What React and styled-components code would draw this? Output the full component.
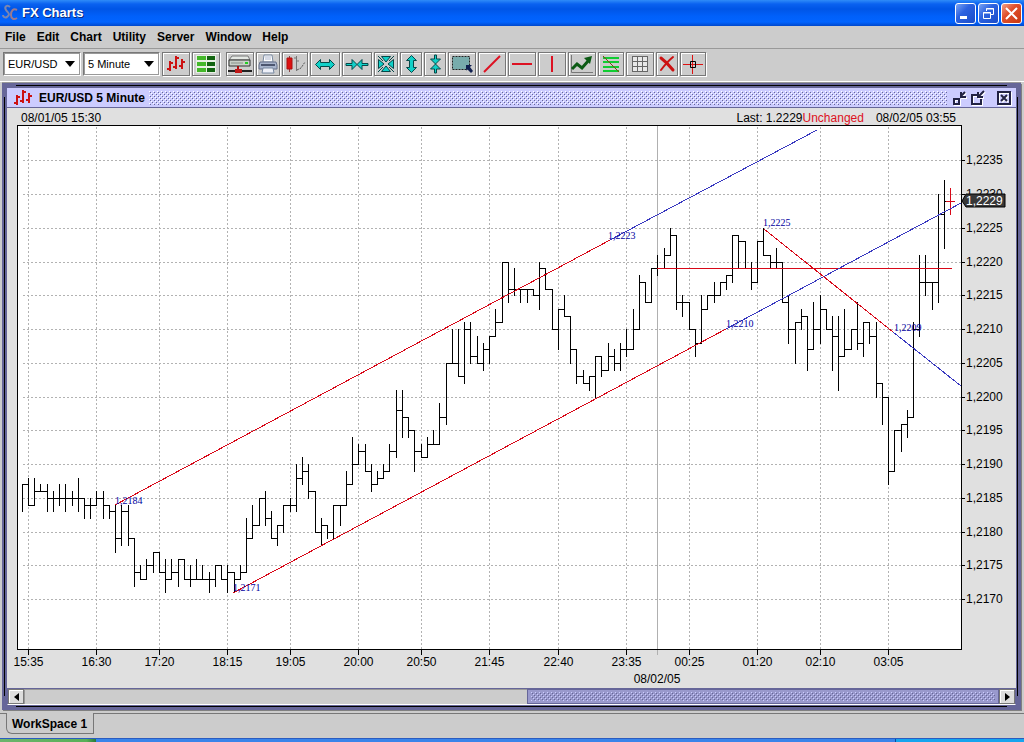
import styled, { createGlobalStyle } from 'styled-components';

const color = {
  panel: '#cccccc',
  chartPanel: '#e0e0e0',
  purple: '#666699',
  midPurple: '#9999cc',
  lightPurple: '#ccccff',
  grid: '#b2b2b2',
  up: '#cc1111',
  teal: '#10d0c8',
  trend: '#d80818',
  projection: '#3838c0',
};

const bumps = (light, dark) => `
    background-image:
      conic-gradient(from 270deg at 1px 1px, ${light} 90deg, transparent 0),
      conic-gradient(from 270deg at 1px 1px, ${light} 90deg, transparent 0),
      conic-gradient(from 270deg at 1px 1px, ${dark} 90deg, transparent 0),
      conic-gradient(from 270deg at 1px 1px, ${dark} 90deg, transparent 0);
    background-size: 4px 4px;
    background-position: 0 0, 2px 2px, 1px 1px, 3px 3px;
`;

const GlobalStyle = createGlobalStyle`
    * {
        box-sizing: border-box;
    }
    body {
        margin: 0;
        background-color: ${color.panel};
        font-family: 'Liberation Sans', Arial, sans-serif;
        font-size: 12px;
        line-height: 16px;
        color: #000;
    }
    button, select {
        font-family: inherit;
        margin: 0;
        padding: 0;
    }
    svg {
        display: block;
    }
`;

const TitleBar = styled.header`
    display: flex;
    align-items: center;
    height: 26px;
    padding: 0 2px;
    gap: 2px;
    background: linear-gradient(#2f8cf8 0, #0a62f0 4px, #0055e6 9px, #0060fa 16px, #0164ff 22px, #0048cc 26px);
    .title {
        flex: 1;
        margin: 0;
        padding-left: 1px;
        font-size: 13px;
        font-weight: 700;
        line-height: 20px;
        color: white;
        text-shadow: 1px 1px 0 #0a2a80;
    }
`;

const WindowButton = styled.button`
    display: grid;
    place-items: center;
    width: 21px;
    height: 21px;
    border: 1px solid white;
    border-radius: 3px;
    background: ${(props) => (props.$close
    ? 'linear-gradient(135deg, #f0a088, #e0502c 40%, #c83810)'
    : 'linear-gradient(135deg, #7aa4f4, #2c62e0 40%, #1a4cc8)')};
`;

const MenuBar = styled.nav`
    display: flex;
    height: 23px;
    padding: 0 5px;
    gap: 11px;
    border-bottom: 1px solid #999;
`;

const MenuItem = styled.button`
    border: 0;
    background: none;
    font-size: 12px;
    font-weight: 700;
    line-height: 22px;
`;

const Toolbar = styled.div`
    display: flex;
    align-items: center;
    height: 32px;
    padding: 0 3px 2px;
    gap: 2px;
`;

const Gap = styled.span`
    width: 2px;
`;

const Combo = styled.label`
    position: relative;
    width: ${(props) => props.$width}px;
    height: 24px;
    border: 1px solid #777;
    border-right-color: white;
    border-bottom-color: white;
    select {
        width: 100%;
        height: 22px;
        padding-left: 3px;
        border: 1px solid #999;
        border-radius: 0;
        appearance: none;
        background-color: white;
        font-size: 11px;
        color: #000;
    }
    svg {
        position: absolute;
        top: 8px;
        right: 5px;
        pointer-events: none;
    }
`;

const ToolButton = styled.button`
    display: grid;
    place-items: center;
    flex: none;
    width: ${(props) => props.$width}px;
    height: 24px;
    border: 1px solid #777;
    background-color: ${color.panel};
    box-shadow: inset 1px 1px 0 white, 1px 1px 0 white;
`;

const Desktop = styled.main`
    padding: 1px 3px 0 2px;
    border-top: 1px solid white;
`;

const line = 'linear-gradient(#000, #000)';
const Frame = styled.section`
    padding: 5px;
    background:
      ${line} 14px 2px / calc(100% - 28px) 1px no-repeat,
      ${line} 14px calc(100% - 3px) / calc(100% - 28px) 1px no-repeat,
      ${line} 2px 14px / 1px calc(100% - 28px) no-repeat,
      ${line} calc(100% - 3px) 14px / 1px calc(100% - 28px) no-repeat,
      ${color.purple};
    box-shadow: 1px 1px 0 #808080, 0 -1px 0 #999;
`;

const FrameTitle = styled.div`
    display: flex;
    align-items: center;
    height: 20px;
    padding: 0 5px 0 6px;
    border-bottom: 1px solid ${color.purple};
    background-color: ${color.lightPurple};
    h2 {
        margin: 0 4px 0 6px;
        font-size: 12px;
        font-weight: 700;
    }
`;

const Bumps = styled.div`
    flex: 1;
    height: 14px;
    margin-right: 5px;
    ${bumps('#ffffff', '#666699')}
`;

const FrameButton = styled.button`
    border: 0;
    background: none;
    & + & {
        margin-left: 2px;
    }
    &:last-child {
        margin-left: 11px;
    }
    svg {
        filter: drop-shadow(1px 1px 0 white);
    }
`;

const ChartPanel = styled.div`
    background-color: ${color.chartPanel};
`;

const ChartHeader = styled.div`
    display: flex;
    height: 17px;
    padding: 2px 60px 0 14px;
    .last {
        margin-left: auto;
    }
    .change {
        color: #dd1122;
    }
    .end {
        margin-left: 12px;
    }
`;

const ChartSvg = styled.svg`
    width: 100%;
    height: auto;
    font-size: 12px;
    .crisp {
        shape-rendering: crispEdges;
    }
    .mark {
        font-family: 'Liberation Serif', 'Times New Roman', serif;
        font-size: 10px;
        fill: #0000a0;
    }
`;

const ScrollBar = styled.div`
    display: flex;
    height: 17px;
    border: 1px solid ${color.purple};
    border-bottom-color: white;
    background-color: ${color.panel};
`;

const ScrollButton = styled.button`
    display: grid;
    place-items: center;
    width: 16px;
    border: 1px solid #777;
    background-color: #ddd;
    box-shadow: inset 1px 1px 0 white;
`;

const ScrollTrack = styled.div`
    flex: 1;
    display: flex;
    justify-content: flex-end;
    box-shadow: inset 1px 1px 0 #999;
`;

const ScrollThumb = styled.div`
    width: 48.4%;
    padding: 2px 3px;
    border: 1px solid ${color.purple};
    background-color: ${color.midPurple};
    &::before {
        content: '';
        display: block;
        height: 100%;
        ${bumps('#ccccff', '#666699')}
    }
`;

const TabBar = styled.footer`
    display: flex;
    height: 28px;
    padding-top: 3px;
    &::before {
        content: '';
        width: 6px;
        border-top: 1px solid #777;
    }
    &::after {
        content: '';
        flex: 1;
        border-top: 1px solid #777;
    }
`;

const Tab = styled.button`
    height: 21px;
    padding: 2px 6px 0 5px;
    border: 1px solid #777;
    border-top: 0;
    border-bottom-left-radius: 6px;
    background: none;
    font-size: 12px;
    font-weight: 700;
`;

const Taskbar = styled.div`
    display: flex;
    height: 4px;
    border-top: 1px solid #2a5cc0;
    background-color: #3a84ea;
    .start {
        width: 96px;
        background: linear-gradient(90deg, #6cb46c, #58b058 90%, #2a7a3a);
    }
    .tray {
        width: 129px;
        margin-left: auto;
        border-left: 1px solid #0a4a9a;
        background-color: #16a4ee;
    }
`;

const Bars = () => (
  <svg width="20" height="18" viewBox="0 0 20 18" fill="none" stroke={color.up} strokeWidth="2">
    <path d="M4 6v10M1 14h3M4 8h3M10 1v13M7 12h3M10 3h3M16 4v10M13 11h3M16 7h3" />
  </svg>
);

const Quotes = () => (
  <svg width="20" height="18" viewBox="0 0 20 18">
    <rect width="20" height="18" fill="#e8f0e4" />
    {[1, 7, 13].map((y) => (
      <g key={ y }>
        <rect x="1" y={ y } width="9" height="4" fill="#44b82a" />
        <rect x="11" y={ y } width="8" height="4" fill="#126410" />
      </g>
    ))}
  </svg>
);

const ServerIcon = () => (
  <svg width="26" height="20" viewBox="0 0 26 20">
    <path d="M5 2h16l2 4H2z" fill="#e4e8e4" stroke="#777" />
    <path d="M2 6h21v6H2z" fill="#c8d0c8" stroke="#333" />
    <path d="M4 9h12" stroke="#889088" />
    <path d="M18 9h3" stroke="#22cc22" strokeWidth="2" />
    <path d="M1 17h24" stroke="#222" strokeWidth="2" />
    <path d="M11 12v4" stroke="#aa1111" strokeWidth="2" />
    <path d="M8 15h7v4H8z" fill="#c01818" />
  </svg>
);

const Printer = () => (
  <svg width="20" height="20" viewBox="0 0 20 20">
    <path d="M5 8l1-7h8l1 7z" fill="#fff" stroke="#7788a0" />
    <path d="M7 3h6M7 5h6" stroke="#aab4cc" />
    <path d="M2 8h16l1 3v4H1v-4z" fill="#a8b4cc" stroke="#66708a" />
    <path d="M3 11h14" stroke="#4c5670" strokeWidth="2" />
    <path d="M5 14h10l1 5H4z" fill="#eef0f8" stroke="#7788a0" />
  </svg>
);

const Shift = () => (
  <svg width="22" height="20" viewBox="0 0 22 20" fill="none">
    <path d="M5.500 2v16" stroke="#884444" />
    <path d="M3 4h5v11H3z" fill="#dd1111" stroke="#aa1111" />
    <path d="M12.500 2v15M10 4h2M13 7h2" stroke="#777" />
    <path d="M13 16l4-2 4-6" stroke="#555" strokeDasharray="2 1" />
  </svg>
);

// shared by the zoom buttons
const Arrow = ({ d, width = 22, height = 20 }) => (
  <svg width={ width } height={ height } viewBox={ `0 0 ${width} ${height}` } fill={ color.teal } stroke="#064848" strokeLinejoin="round">
    <path d={ d } />
  </svg>
);

const StretchX = () => <Arrow d="M1.500 10.500l5-5v3h9v-3l5 5-5 5v-3h-9v3z" />;
const ShrinkX = () => <Arrow width={ 24 } d="M1 9.500h6v-4l5 5 5-5v4h6v2h-6v4l-5-5-5 5v-4H1z" />;
const StretchY = () => <Arrow width={ 14 } d="M7.500 1.500l5 5h-3v7h3l-5 5-5-5h3v-7h-3z" />;
const ShrinkY = () => <Arrow width={ 14 } d="M6.500 1v4h-4l5 5-5 5h4v4h2v-4h4l-5-5 5-5h-4V1z" />;
const FitAll = () => (
  <Arrow width={ 20 } d="M5.500 2.500h9L10 8zM5.500 17.500h9L10 12zM2.500 5.500v9L8 10zM17.500 5.500v9L12 10zM2 2l5 5M18 2l-5 5M2 18l5-5M18 18l-5-5" />
);

const Select = () => (
  <svg width="24" height="20" viewBox="0 0 24 20">
    <rect x="2.500" y="2.500" width="17" height="13" fill="#78acac" stroke="#222" strokeDasharray="2 1" />
    <path d="M16 11h6l-2 2 3 4-2 2-4-4-1 2z" fill="#102050" />
  </svg>
);

const Stroke = ({ d }) => (
  <svg width="22" height="20" viewBox="0 0 22 20" stroke="#dd1122" strokeWidth="2">
    <path d={ d } />
  </svg>
);

const Study = () => (
  <svg width="24" height="20" viewBox="0 0 24 20" fill="none">
    <path d="M1.500 1v17.500H23" stroke="#777" />
    <path d="M2 15l5-5 5 4 7-8" stroke="#0c5a14" strokeWidth="3" />
    <path d="M14 4l8-2-2 8z" fill="#0c5a14" />
  </svg>
);

const Fibonacci = () => (
  <svg width="20" height="20" viewBox="0 0 20 20">
    <path d="M2 4h16M2 8h16M2 13h16M2 17h16" stroke="#11cc33" strokeWidth="2" />
    <path d="M2 2l16 16" stroke="#884411" />
  </svg>
);

const GridIcon = () => (
  <svg width="16" height="16" viewBox="0 0 16 16">
    <rect width="16" height="16" fill="#666" />
    {[1, 6, 11].map((y) => [1, 6, 11].map((x) => (
      <rect key={ `${x}-${y}` } x={ x } y={ y } width="4" height="4" fill="#e8e8e8" />
    )))}
  </svg>
);

const Delete = () => (
  <svg width="18" height="18" viewBox="0 0 18 18" fill="none" stroke="#cc1111" strokeLinecap="round">
    <path d="M3 3c4 3 8 7 12 12" strokeWidth="3" />
    <path d="M15 2C10 6 6 11 3 15" strokeWidth="2" />
  </svg>
);

const Crosshair = () => (
  <svg width="22" height="20" viewBox="0 0 22 20" fill="none">
    <path d="M1 10.500h20M10.500 1v19" stroke="#dd1111" />
    <path d="M8.500 7.500h5v6h-5z" stroke="#000" />
  </svg>
);

const tools = [
  { name: 'Bar chart', width: 28, icon: <Bars /> },
  { name: 'Quotes', width: 28, icon: <Quotes />, gap: true },
  { name: 'Connect', width: 28, icon: <ServerIcon /> },
  { name: 'Print', width: 24, icon: <Printer /> },
  { name: 'Shift chart', width: 26, icon: <Shift /> },
  { name: 'Expand time', width: 30, icon: <StretchX /> },
  { name: 'Compress time', width: 30, icon: <ShrinkX /> },
  { name: 'Fit', width: 24, icon: <FitAll /> },
  { name: 'Expand price', width: 22, icon: <StretchY /> },
  { name: 'Compress price', width: 22, icon: <ShrinkY /> },
  { name: 'Zoom area', width: 28, icon: <Select /> },
  { name: 'Trend line', width: 28, icon: <Stroke d="M3 18L19 2" /> },
  { name: 'Horizontal line', width: 28, icon: <Stroke d="M1 10h20" /> },
  { name: 'Vertical line', width: 28, icon: <Stroke d="M11 2v16" /> },
  { name: 'Studies', width: 28, icon: <Study /> },
  { name: 'Fibonacci', width: 26, icon: <Fibonacci /> },
  { name: 'Grid', width: 28, icon: <GridIcon /> },
  { name: 'Delete', width: 22, icon: <Delete /> },
  { name: 'Crosshair', width: 26, icon: <Crosshair /> },
];

// [high, low, close] in points above 1,2100, one entry per 5 minutes from 15:30
const prices = [
  [87, 83, 87], [88, 84, 84], [88, 84, 86], [87, 86, 86], [87, 83, 85], [86, 83, 85], [87, 84, 85], [87, 83, 85],
  [86, 84, 85], [88, 83, 85], [85, 82, 84], [85, 82, 84], [86, 84, 85], [86, 82, 84], [84, 82, 83], [84, 77, 79],
  [84, 78, 83], [84, 78, 79], [79, 72, 74], [75, 73, 73], [76, 73, 75], [77, 74, 77], [77, 74, 74], [76, 71, 73],
  [76, 73, 74], [76, 72, 76], [76, 73, 73], [75, 72, 73], [76, 73, 73], [75, 73, 73], [74, 71, 73], [75, 72, 75],
  [75, 73, 73], [75, 71, 74], [74, 71, 73], [75, 73, 74], [82, 74, 79], [84, 79, 81], [85, 81, 85], [86, 81, 82],
  [83, 79, 79], [81, 78, 81], [84, 80, 84], [85, 83, 84], [90, 83, 88], [91, 87, 89], [90, 85, 86], [86, 80, 80],
  [82, 78, 81], [81, 79, 80], [84, 79, 84], [84, 81, 84], [89, 84, 87], [94, 87, 90], [93, 90, 92], [93, 89, 89],
  [90, 86, 87], [89, 87, 88], [90, 88, 89], [93, 89, 92], [101, 91, 98], [101, 94, 97], [97, 94, 95], [95, 89, 92],
  [93, 91, 91], [94, 91, 93], [95, 93, 93], [99, 93, 97], [105, 96, 105], [110, 105, 105], [110, 103, 103], [111, 102, 110],
  [111, 105, 106], [109, 105, 105], [108, 104, 107], [109, 105, 109], [113, 109, 111], [120, 111, 120], [120, 114, 116], [119, 115, 116],
  [116, 114, 116], [116, 114, 116], [116, 115, 115], [120, 113, 119], [119, 116, 116], [116, 110, 110], [113, 107, 113], [115, 112, 112],
  [112, 105, 107], [107, 102, 103], [104, 102, 102], [103, 101, 103], [106, 100, 106], [106, 103, 104], [108, 104, 106], [107, 104, 105],
  [108, 104, 107], [110, 106, 107], [113, 107, 110], [118, 110, 117], [117, 114, 114], [119, 114, 119], [121, 118, 119], [122, 119, 121],
  [125, 121, 124], [124, 113, 114], [115, 112, 114], [114, 110, 110], [110, 106, 108], [115, 108, 113], [115, 113, 115], [117, 114, 115],
  [117, 115, 117], [118, 116, 118], [124, 117, 124], [124, 119, 123], [123, 119, 119], [120, 116, 117], [123, 117, 123], [125, 121, 121],
  [121, 119, 120], [122, 119, 120], [120, 114, 114], [115, 108, 110], [111, 105, 111], [113, 110, 112], [112, 104, 107], [114, 107, 110],
  [115, 108, 113], [113, 110, 110], [112, 104, 109], [112, 101, 106], [113, 106, 107], [110, 107, 110], [114, 107, 108], [111, 106, 111],
  [111, 108, 109], [111, 100, 102], [102, 96, 100], [100, 87, 89], [95, 89, 95], [96, 92, 96], [98, 94, 97], [111, 97, 110],
  [121, 109, 117], [121, 115, 117], [117, 113, 117], [130, 114, 127], [132, 122, 129], [131, 127, 129],
];

const times = [
  [1, '15:35'], [12, '16:30'], [22, '17:20'], [33, '18:15'], [43, '19:05'], [54, '20:00'], [64, '20:50'],
  [75, '21:45'], [86, '22:40'], [97, '23:35'], [107, '00:25'], [118, '01:20'], [128, '02:10'], [139, '03:05'],
];

const levels = [135, 130, 125, 120, 115, 110, 105, 100, 95, 90, 85, 80, 75, 70];

const plot = { left: 10, right: 954, top: 0, bottom: 524 };
const toX = (i) => Math.floor(15.2 + i * 6.233) + 0.5;
const toY = (p) => Math.floor(272.1 - (p - 100) * 6.754) + 0.5;

const last = prices.length - 1;
const barPath = prices.slice(0, last).map(([high, low, close], i) => (
  `M${toX(i)} ${toY(high) - 0.5}V${toY(low) + 0.5}M${toX(i)} ${toY(close)}H${toX(i + 1)}`
)).join('');

const trends = [
  { from: [108, 380], mid: [603, 115], to: [810, 5] },
  { from: [226, 468], mid: [719, 204], to: [954, 78] },
  { from: [757, 104], mid: [886, 207], to: [954, 261] },
];

const marks = [
  [108, 379, '1,2184'], [226, 466, '1,2171'], [601, 114, '1,2223'],
  [719, 202, '1,2210'], [756, 101, '1,2225'], [887, 206, '1,2209'],
];

const Chart = () => (
  <ChartSvg viewBox="0 0 1009 563" role="img" aria-label="EUR/USD 5 Minute">
    <g className="crisp">
      <rect x="10.5" y="0.5" width="944" height="524" fill="white" />
      <g stroke={ color.grid } strokeDasharray="2 2">
        {levels.map((p) => <path key={ p } d={ `M${plot.left + 6} ${toY(p)}H${plot.right}` } />)}
        {times.map(([i]) => <path key={ i } d={ `M${toX(i)} 2V${plot.bottom}` } />)}
      </g>
      <path d={ `M650.5 0V${plot.bottom + 6}` } stroke="#b0b0b0" />
      <rect x="10.5" y="0.5" width="944" height="524" fill="none" stroke="#000" />
      <path d={ barPath } fill="none" stroke="#000" />
      <path d={ `M650 ${toY(119)}H945` } stroke={ color.trend } />
      <path
        d={ `M${toX(last)} ${toY(131)}V${toY(127)}M${toX(last) - 5} ${toY(129)}h9` }
        stroke={ color.trend }
      />
      <g stroke="#000">
        {levels.map((p) => <path key={ p } d={ `M${plot.right} ${toY(p)}h4` } />)}
        {times.map(([i]) => <path key={ i } d={ `M${toX(i)} ${plot.bottom}v6` } />)}
      </g>
      {trends.map(({ from, mid, to }) => (
        <g key={ from[0] }>
          <path d={ `M${from}L${mid}` } stroke={ color.trend } />
          <path d={ `M${mid}L${to}` } stroke={ color.projection } />
        </g>
      ))}
    </g>
    {levels.map((p) => (
      <text key={ p } x="959" y={ toY(p) + 3.5 }>{ `1,2${String(p + 100).slice(0, 3)}` }</text>
    ))}
    {times.map(([i, label]) => (
      <text key={ i } x={ toX(i) } y="541" textAnchor="middle">{label}</text>
    ))}
    <text x="650" y="558" textAnchor="middle">08/02/05</text>
    {marks.map(([x, y, label]) => <text className="mark" key={ label } x={ x } y={ y }>{label}</text>)}
    <path d="M955 76l4-7h39v13h-39z" fill="#383838" stroke="#000" />
    <text x="959" y="80" fill="white">1,2229</text>
  </ChartSvg>
);

const App = () => {
  return (
    <>
      <GlobalStyle />
      <TitleBar>
        <svg width="17" height="20" viewBox="0 0 17 20" fill="none" stroke="#7a86b0" strokeWidth="2">
          <path d="M8 4C5 1 2 4 4 7s5 4 1 7c-2 1-4 0-4-2" />
          <path d="M15 7c-4-2-6 1-6 5s3 5 6 3" stroke="#9a7a90" />
        </svg>
        <h1 className="title">FX Charts</h1>
        <WindowButton aria-label="Minimize">
          <svg width="15" height="15"><path d="M2 11.500h7" stroke="white" strokeWidth="3" /></svg>
        </WindowButton>
        <WindowButton aria-label="Restore">
          <svg width="15" height="15" fill="none" stroke="white">
            <path d="M5.500 5V2.500h7v6H10M5 3h8" />
            <path d="M2.500 6.500h7v6h-7zM2 7h8" />
          </svg>
        </WindowButton>
        <WindowButton $close aria-label="Close">
          <svg width="15" height="15"><path d="M2 2l11 11M13 2L2 13" stroke="white" strokeWidth="2" /></svg>
        </WindowButton>
      </TitleBar>
      <MenuBar>
        {['File', 'Edit', 'Chart', 'Utility', 'Server', 'Window', 'Help'].map((item) => (
          <MenuItem key={ item }>{item}</MenuItem>
        ))}
      </MenuBar>
      <Toolbar>
        <Combo $width={ 78 }>
          <select aria-label="Symbol"><option>EUR/USD</option></select>
          <svg width="10" height="6"><path d="M0 0h10L5 6z" /></svg>
        </Combo>
        <Combo $width={ 77 }>
          <select aria-label="Interval"><option>5 Minute</option></select>
          <svg width="10" height="6"><path d="M0 0h10L5 6z" /></svg>
        </Combo>
        {tools.map(({ name, width, icon, gap }) => [
          <ToolButton key={ name } $width={ width } aria-label={ name }>{icon}</ToolButton>,
          gap && <Gap key={ `${name}-gap` } />,
        ])}
      </Toolbar>
      <Desktop>
        <Frame>
          <FrameTitle>
            <Bars />
            <h2>EUR/USD 5 Minute</h2>
            <Bumps />
            <FrameButton aria-label="Iconify">
              <svg width="16" height="16" fill="none" stroke="#222244" strokeWidth="2">
                <path d="M2 9h5v5H2zM13 2L9 6M9 2v5h5" />
              </svg>
            </FrameButton>
            <FrameButton aria-label="Restore chart">
              <svg width="16" height="16" fill="none" stroke="#222244" strokeWidth="2">
                <path d="M7 5H2v9h9V9M14 1L8 7M8 2v5h5" />
              </svg>
            </FrameButton>
            <FrameButton aria-label="Close chart">
              <svg width="14" height="14" fill="none" stroke="#222244">
                <path d="M1 1h12v12H1z" strokeWidth="2" />
                <path d="M4 4l6 6M10 4l-6 6" strokeWidth="2" />
              </svg>
            </FrameButton>
          </FrameTitle>
          <ChartPanel>
            <ChartHeader>
              <span>08/01/05 15:30</span>
              <span className="last">Last: 1.2229</span>
              <span className="change">Unchanged</span>
              <span className="end">08/02/05 03:55</span>
            </ChartHeader>
            <Chart />
            <ScrollBar>
              <ScrollButton aria-label="Scroll left">
                <svg width="5" height="8"><path d="M5 0v8L0 4z" /></svg>
              </ScrollButton>
              <ScrollTrack><ScrollThumb /></ScrollTrack>
              <ScrollButton aria-label="Scroll right">
                <svg width="5" height="8"><path d="M0 0v8l5-4z" /></svg>
              </ScrollButton>
            </ScrollBar>
          </ChartPanel>
        </Frame>
      </Desktop>
      <TabBar><Tab>WorkSpace 1</Tab></TabBar>
      <Taskbar>
        <div className="start" />
        <div className="tray" />
      </Taskbar>
    </>
  );
};

export default App;
